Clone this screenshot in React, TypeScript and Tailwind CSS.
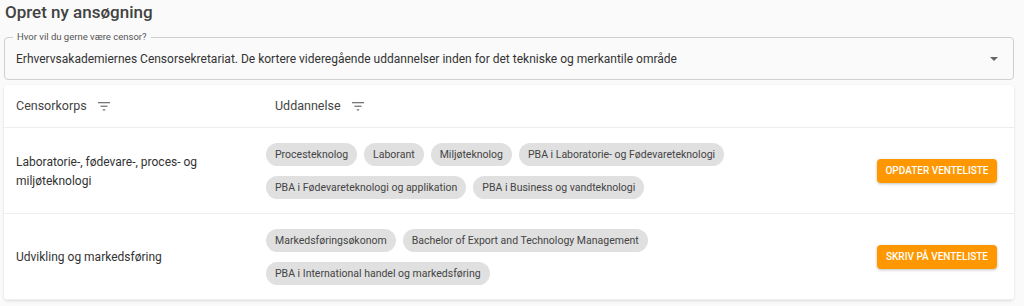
import type { ReactNode } from 'react';

type Row = {
  korps: ReactNode;
  uddannelser: string[];
  action: string;
};

const rows: Row[] = [
  {
    korps: (
      <>
        Laboratorie-, fødevare-, proces- og
        <br />
        miljøteknologi
      </>
    ),
    uddannelser: [
      'Procesteknolog',
      'Laborant',
      'Miljøteknolog',
      'PBA i Laboratorie- og Fødevareteknologi',
      'PBA i Fødevareteknologi og applikation',
      'PBA i Business og vandteknologi',
    ],
    action: 'Opdater venteliste',
  },
  {
    korps: 'Udvikling og markedsføring',
    uddannelser: [
      'Markedsføringsøkonom',
      'Bachelor of Export and Technology Management',
      'PBA i International handel og markedsføring',
    ],
    action: 'Skriv på venteliste',
  },
];

function FilterIcon() {
  return (
    <svg width="12" height="9" viewBox="0 0 12 9" className="ml-[11px] text-[#777]">
      <rect x="0" y="0" width="12" height="1.3" fill="currentColor" />
      <rect x="2.5" y="3.6" width="7" height="1.3" fill="currentColor" />
      <rect x="4.8" y="7.2" width="2.4" height="1.3" fill="currentColor" />
    </svg>
  );
}

function Chip({ label }: { label: string }) {
  return (
    <span className="inline-flex h-[23px] items-center rounded-full bg-[#e0e0e0] px-[9px] text-[10.5px] text-[#444]">
      {label}
    </span>
  );
}

export default function App() {
  return (
    <div className="min-h-[306px] bg-[#fafafa] pl-[4px] pr-[10px] font-['Roboto',sans-serif] text-[#333]">
      <div className="pl-px pt-[2px] text-[17px] font-medium leading-[20px] text-[#424242]">
        Opret ny ansøgning
      </div>

      <div className="relative mt-[15px] flex h-[43px] items-center rounded border border-[#cfcfcf] pl-[11px] pr-[15px]">
        <span className="absolute -top-[7px] left-[8px] bg-[#fafafa] px-[4px] text-[9.5px] leading-[12px] text-[#555]">
          Hvor vil du gerne være censor?
        </span>
        <span className="flex-1 truncate pt-[1px] text-[12px] text-[#333]">
          Erhvervsakademiernes Censorsekretariat. De kortere videregående uddannelser inden for det tekniske og merkantile område
        </span>
        <svg width="8" height="4" viewBox="0 0 8 4" className="text-[#666]">
          <path d="M0 0 L8 0 L4 4 Z" fill="currentColor" />
        </svg>
      </div>

      <div className="mt-[5px] rounded bg-white shadow-[0_1px_3px_rgba(0,0,0,0.12)]">
        <div className="grid h-[43px] grid-cols-[259px_1fr] items-center border-b border-[#eeeeee] text-[12.5px] text-[#444]">
          <div className="flex items-center pl-3">
            Censorkorps
            <FilterIcon />
          </div>
          <div className="flex items-center pl-3">
            Uddannelse
            <FilterIcon />
          </div>
        </div>

        {rows.map((row, index) => (
          <div
            key={index}
            className="grid h-[86px] grid-cols-[259px_1fr_auto] items-center border-b border-[#eeeeee] pr-[17px]"
          >
            <div className="pl-3 pt-[2px] text-[12px] leading-[19px] text-[#333]">{row.korps}</div>
            <div className="flex flex-wrap gap-x-[7px] gap-y-[10px] pl-[3px] pr-4 pt-px">
              {row.uddannelser.map((u) => (
                <Chip key={u} label={u} />
              ))}
            </div>
            <button
              type="button"
              className="h-[24px] w-[120px] rounded bg-[#ff9800] text-[10px] font-medium uppercase text-white shadow-[0_1px_3px_rgba(0,0,0,0.25)]"
            >
              {row.action}
            </button>
          </div>
        ))}
      </div>
    </div>
  );
}
